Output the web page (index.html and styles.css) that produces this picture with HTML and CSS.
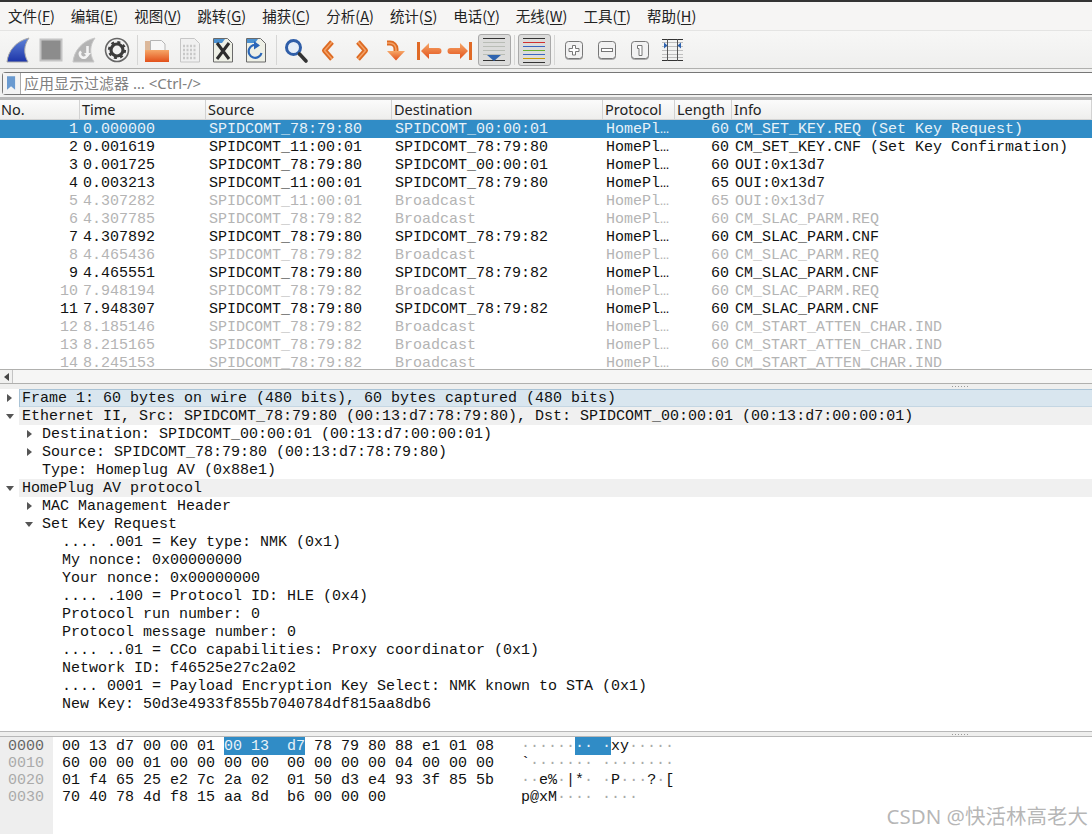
FILE: index.html
```html
<!DOCTYPE html>
<html lang="zh">
<head>
<meta charset="utf-8">
<title>Wireshark</title>
<link rel="stylesheet" href="styles.css">
</head>
<body>
<div class="app">
  <nav class="menubar">
    <span>文件(<u>F</u>)</span><span>编辑(<u>E</u>)</span><span>视图(<u>V</u>)</span><span>跳转(<u>G</u>)</span><span>捕获(<u>C</u>)</span><span>分析(<u>A</u>)</span><span>统计(<u>S</u>)</span><span>电话(<u>Y</u>)</span><span>无线(<u>W</u>)</span><span>工具(<u>T</u>)</span><span>帮助(<u>H</u>)</span>
  </nav>
  <div class="toolbar">
    <div class="tool"><svg viewBox="0 0 32 32" class="ico"><defs><linearGradient id="fin" x1="0" y1="0" x2="0" y2="1"><stop offset="0" stop-color="#5f83d8"/><stop offset="1" stop-color="#1c34a8"/></linearGradient><linearGradient id="org" x1="0" y1="0" x2="0" y2="1"><stop offset="0" stop-color="#f6a768"/><stop offset="1" stop-color="#e2501a"/></linearGradient></defs><path d="M5 28C6 17 14 7 27 4C22 11 21 19 26 28Z" fill="url(#fin)" stroke="#a9a9a9"/></svg></div>
    <div class="tool"><svg viewBox="0 0 32 32" class="ico"><rect x="5.500" y="5.500" width="21" height="21" fill="#8c8c8c" stroke="#c4c4c4" stroke-width="2"/></svg></div>
    <div class="tool"><svg viewBox="0 0 32 32" class="ico"><path d="M5 28C6 17 14 7 27 4C22 11 21 19 26 28Z" fill="#b4b4b4" stroke="#c8c8c8"/><path d="M19.500 12v8a3.800 3.800 0 1 1-6.500-2.700" fill="none" stroke="#f4f4f4" stroke-width="2.600"/><path d="M16 19l3.500 4 3.500-4z" fill="#f4f4f4"/></svg></div>
    <div class="tool"><svg viewBox="0 0 32 32" class="ico"><circle cx="16" cy="16" r="11.500" fill="#f2f2f2" stroke="#666" stroke-width="1.600"/><circle cx="16" cy="16" r="6" fill="none" stroke="#3c3c3c" stroke-width="3.200"/><circle cx="16" cy="16" r="8" fill="none" stroke="#3c3c3c" stroke-width="2.200" stroke-dasharray="3 3.300"/></svg></div>
    <div class="sep"></div>
    <div class="tool"><svg viewBox="0 0 32 32" class="ico"><path d="M4 7h5v9H4z" fill="#dcb89a"/><path d="M9.500 6.500h11l3.500 3.500v7H9.500z" fill="#f7f7f7" stroke="#b5b5b5"/><rect x="4" y="16" width="24" height="12" fill="url(#org)"/></svg></div>
    <div class="tool"><svg viewBox="0 0 32 32" class="ico"><path d="M6.500 4.500h14l5 5v18.500h-19z" fill="#f0f0f0" stroke="#c6c6c6"/><path d="M9 12h14M9 16h14M9 20h14M9 24h14" stroke="#c8c8c8" stroke-width="2.400" stroke-dasharray="2 1.500"/></svg></div>
    <div class="tool"><svg viewBox="0 0 32 32" class="ico"><path d="M6.500 4.500h14l5 5v18.500h-19z" fill="#eef0e6" stroke="#6a6a6a"/><path d="M7 5h11l-3 4H7z" fill="#4a90d0"/><path d="M10 9l12 16M22 9L10 25" stroke="#2d2d2d" stroke-width="3"/></svg></div>
    <div class="tool"><svg viewBox="0 0 32 32" class="ico"><path d="M6.500 4.500h14l5 5v18.500h-19z" fill="#eef0e6" stroke="#6a6a6a"/><path d="M7 5h11l-3 4H7z" fill="#4a90d0"/><path d="M18 11.500a6.500 6.500 0 1 0 3.500 7.500" fill="none" stroke="#2a66b8" stroke-width="2.200"/><path d="M14 7l6 4.500-6 4z" fill="#2a66b8"/></svg></div>
    <div class="sep"></div>
    <div class="tool"><svg viewBox="0 0 32 32" class="ico"><circle cx="13.500" cy="13.500" r="7" fill="#e6eef8" stroke="#2f5ea8" stroke-width="3"/><path d="M19.500 20l6.500 7" stroke="#333" stroke-width="3.600" stroke-linecap="round"/></svg></div>
    <div class="tool"><svg viewBox="0 0 32 32" class="ico"><path class="o1" d="M19 8l-7.500 8.500L19 25"/><path class="o2" d="M19 8l-7.500 8.500L19 25"/></svg></div>
    <div class="tool"><svg viewBox="0 0 32 32" class="ico"><path class="o1" d="M12 8l7.500 8.500L12 25"/><path class="o2" d="M12 8l7.500 8.500L12 25"/></svg></div>
    <div class="tool"><svg viewBox="0 0 32 32" class="ico"><path class="o1" d="M8 9h3a6 6 0 0 1 6 6v4"/><path class="o2" d="M8 9h3a6 6 0 0 1 6 6v4"/><path d="M8 17h18l-9 9.500z" fill="url(#org)"/></svg></div>
    <div class="tool"><svg viewBox="0 0 32 32" class="ico"><path d="M6.500 8v18" stroke="#e06a26" stroke-width="3"/><path d="M9 17l8-8v5h9.500a3 3 0 0 1 0 6H17v5z" fill="url(#org)"/></svg></div>
    <div class="tool"><svg viewBox="0 0 32 32" class="ico"><path d="M25.500 8v18" stroke="#e06a26" stroke-width="3"/><path d="M23 17l-8-8v5H5.500a3 3 0 0 0 0 6H15v5z" fill="url(#org)"/></svg></div>
    <div class="tool on"><svg viewBox="1 1 30 30" class="ico"><path d="M5 4.500h22M5 26.500h22" stroke="#333"/><path d="M5 8.500h22M5 12.500h22M5 16.500h22M5 20.500h22" stroke="#b9bdb6"/><path d="M9 21h14l-7 6z" fill="#2f64b0"/></svg></div>
    <div class="sep"></div>
    <div class="tool on"><svg viewBox="1 1 30 30" class="ico"><path d="M5 4.500h22" stroke="#333"/><path d="M5 8.500h22" stroke="#d03030"/><path d="M5 12.500h22" stroke="#3a66c0"/><path d="M5 16.500h22" stroke="#6ab030"/><path d="M5 20.500h22" stroke="#3a66c0"/><path d="M5 24.500h22" stroke="#c89a00"/><path d="M5 28.500h22" stroke="#333"/></svg></div>
    <div class="sep"></div>
    <div class="tool"><svg viewBox="0 0 32 32" class="ico"><rect x="7.500" y="7.500" width="17" height="17" rx="3" fill="#f2f2f2" stroke="#777" class="zb"/><path d="M14.500 11.500h3v3h3.500v3h-3.500v3.500h-3v-3.500H11v-3h3.500z" fill="#fff" stroke="#777"/></svg></div>
    <div class="tool"><svg viewBox="0 0 32 32" class="ico"><rect x="7.500" y="7.500" width="17" height="17" rx="3" fill="#f2f2f2" stroke="#777" class="zb"/><rect x="10.500" y="14.500" width="11" height="3" fill="#fff" stroke="#777"/></svg></div>
    <div class="tool"><svg viewBox="0 0 32 32" class="ico"><rect x="7.500" y="7.500" width="17" height="17" rx="3" fill="#f2f2f2" stroke="#777" class="zb"/><path d="M13.500 11.500H18v10h-3v-7h-1.500z" fill="#fff" stroke="#777"/></svg></div>
    <div class="tool"><svg viewBox="0 0 32 32" class="ico"><path d="M5 8.500h21M5 12.500h21M5 16.500h21M5 20.500h21M5 23.500h21" stroke="#bfbfbf"/><path d="M5 5.500h21M5 26.500h21" stroke="#333"/><path d="M10.500 5v22M20.500 5v22" stroke="#555"/><path d="M7 8.500l3.500 3-3.500 3zM24 8.500l-3.500 3 3.500 3z" fill="#2f64b0"/></svg></div>
  </div>
  <div class="filterbar">
    <div class="filter">
      <span class="bookmark"><svg viewBox="0 0 10 16" class="bm"><path d="M0 0h9v15l-4.500-4L0 15z" fill="#6a9ad0"/></svg></span>
      <span class="placeholder">应用显示过滤器 … &lt;Ctrl-/&gt;</span>
    </div>
  </div>
  <div class="packets">
    <div class="row head"><span>No.</span><span>Time</span><span>Source</span><span>Destination</span><span>Protocol</span><span>Length</span><span>Info</span></div>
    <div class="list">
      <div class="row sel"><span class="n">1</span><span>0.000000</span><span>SPIDCOMT_78:79:80</span><span>SPIDCOMT_00:00:01</span><span>HomePl…</span><span class="n">60</span><span>CM_SET_KEY.REQ (Set Key Request)</span></div>
      <div class="row"><span class="n">2</span><span>0.001619</span><span>SPIDCOMT_11:00:01</span><span>SPIDCOMT_78:79:80</span><span>HomePl…</span><span class="n">60</span><span>CM_SET_KEY.CNF (Set Key Confirmation)</span></div>
      <div class="row"><span class="n">3</span><span>0.001725</span><span>SPIDCOMT_78:79:80</span><span>SPIDCOMT_00:00:01</span><span>HomePl…</span><span class="n">60</span><span>OUI:0x13d7</span></div>
      <div class="row"><span class="n">4</span><span>0.003213</span><span>SPIDCOMT_11:00:01</span><span>SPIDCOMT_78:79:80</span><span>HomePl…</span><span class="n">65</span><span>OUI:0x13d7</span></div>
      <div class="row dim"><span class="n">5</span><span>4.307282</span><span>SPIDCOMT_11:00:01</span><span>Broadcast</span><span>HomePl…</span><span class="n">65</span><span>OUI:0x13d7</span></div>
      <div class="row dim"><span class="n">6</span><span>4.307785</span><span>SPIDCOMT_78:79:82</span><span>Broadcast</span><span>HomePl…</span><span class="n">60</span><span>CM_SLAC_PARM.REQ</span></div>
      <div class="row"><span class="n">7</span><span>4.307892</span><span>SPIDCOMT_78:79:80</span><span>SPIDCOMT_78:79:82</span><span>HomePl…</span><span class="n">60</span><span>CM_SLAC_PARM.CNF</span></div>
      <div class="row dim"><span class="n">8</span><span>4.465436</span><span>SPIDCOMT_78:79:82</span><span>Broadcast</span><span>HomePl…</span><span class="n">60</span><span>CM_SLAC_PARM.REQ</span></div>
      <div class="row"><span class="n">9</span><span>4.465551</span><span>SPIDCOMT_78:79:80</span><span>SPIDCOMT_78:79:82</span><span>HomePl…</span><span class="n">60</span><span>CM_SLAC_PARM.CNF</span></div>
      <div class="row dim"><span class="n">10</span><span>7.948194</span><span>SPIDCOMT_78:79:82</span><span>Broadcast</span><span>HomePl…</span><span class="n">60</span><span>CM_SLAC_PARM.REQ</span></div>
      <div class="row"><span class="n">11</span><span>7.948307</span><span>SPIDCOMT_78:79:80</span><span>SPIDCOMT_78:79:82</span><span>HomePl…</span><span class="n">60</span><span>CM_SLAC_PARM.CNF</span></div>
      <div class="row dim"><span class="n">12</span><span>8.185146</span><span>SPIDCOMT_78:79:82</span><span>Broadcast</span><span>HomePl…</span><span class="n">60</span><span>CM_START_ATTEN_CHAR.IND</span></div>
      <div class="row dim"><span class="n">13</span><span>8.215165</span><span>SPIDCOMT_78:79:82</span><span>Broadcast</span><span>HomePl…</span><span class="n">60</span><span>CM_START_ATTEN_CHAR.IND</span></div>
      <div class="row dim"><span class="n">14</span><span>8.245153</span><span>SPIDCOMT_78:79:82</span><span>Broadcast</span><span>HomePl…</span><span class="n">60</span><span>CM_START_ATTEN_CHAR.IND</span></div>
    </div>
  </div>
  <div class="hscroll"><span class="arrowbtn"><i class="tri left"></i></span></div>
  <div class="splitter"><span class="grip"></span></div>
  <div class="tree">
    <div class="node l0 cur"><i class="tri right"></i><span>Frame 1: 60 bytes on wire (480 bits), 60 bytes captured (480 bits)</span></div>
    <div class="node l0 band"><i class="tri down"></i><span>Ethernet II, Src: SPIDCOMT_78:79:80 (00:13:d7:78:79:80), Dst: SPIDCOMT_00:00:01 (00:13:d7:00:00:01)</span></div>
    <div class="node l1"><i class="tri right"></i><span>Destination: SPIDCOMT_00:00:01 (00:13:d7:00:00:01)</span></div>
    <div class="node l1"><i class="tri right"></i><span>Source: SPIDCOMT_78:79:80 (00:13:d7:78:79:80)</span></div>
    <div class="node l1"><i class="tri none"></i><span>Type: Homeplug AV (0x88e1)</span></div>
    <div class="node l0 band"><i class="tri down"></i><span>HomePlug AV protocol</span></div>
    <div class="node l1"><i class="tri right"></i><span>MAC Management Header</span></div>
    <div class="node l1"><i class="tri down"></i><span>Set Key Request</span></div>
    <div class="node l2"><span>.... .001 = Key type: NMK (0x1)</span></div>
    <div class="node l2"><span>My nonce: 0x00000000</span></div>
    <div class="node l2"><span>Your nonce: 0x00000000</span></div>
    <div class="node l2"><span>.... .100 = Protocol ID: HLE (0x4)</span></div>
    <div class="node l2"><span>Protocol run number: 0</span></div>
    <div class="node l2"><span>Protocol message number: 0</span></div>
    <div class="node l2"><span>.... ..01 = CCo capabilities: Proxy coordinator (0x1)</span></div>
    <div class="node l2"><span>Network ID: f46525e27c2a02</span></div>
    <div class="node l2"><span>.... 0001 = Payload Encryption Key Select: NMK known to STA (0x1)</span></div>
    <div class="node l2"><span>New Key: 50d3e4933f855b7040784df815aa8db6</span></div>
  </div>
  <div class="splitter low"><span class="grip"></span></div>
  <div class="hex">
    <div class="offsets"><div class="active">0000</div><div>0010</div><div>0020</div><div>0030</div></div>
    <div class="bytes"><div>00 13 d7 00 00 01 <mark>00 13  d7</mark> 78 79 80 88 e1 01 08</div><div>60 00 00 01 00 00 00 00  00 00 00 00 04 00 00 00</div><div>01 f4 65 25 e2 7c 2a 02  01 50 d3 e4 93 3f 85 5b</div><div>70 40 78 4d f8 15 aa 8d  b6 00 00 00</div></div>
    <div class="ascii"><div><b>······</b><mark>·· ·</mark>xy<b>·····</b></div><div>`<b>·······</b> <b>········</b></div><div><b>··</b>e%<b>·</b>|*<b>·</b> <b>·</b>P<b>···</b>?<b>·</b>[</div><div>p@xM<b>····</b> <b>····</b></div></div>
  </div>
  <div class="watermark">CSDN @快活林高老大</div>
</div>
</body>
</html>
```
FILE: styles.css
```css
* { box-sizing: border-box; }
html, body { margin: 0; padding: 0; height: 100%; overflow: hidden; }
body { background: #fff; color: #111; font-family: "Noto Sans", "Noto Sans CJK SC", sans-serif; }
.app { position: relative; width: 1092px; height: 834px; display: flex; flex-direction: column; overflow: hidden; border-top: 2px solid #333; }

.menubar { height: 28px; flex: none; display: flex; gap: 16px; align-items: center; padding: 0 0 0 8px; background: #f6f5f4; font-size: 14.500px; line-height: 20px; color: #222; font-family: "Noto Sans CJK SC", "Noto Sans", sans-serif; }
.menubar u { text-underline-offset: 2px; }

.toolbar { height: 39px; flex: none; display: flex; align-items: center; padding-left: 1.500px; background: linear-gradient(#f7f7f6, #efefee); border-top: 1px solid #e4e4e3; border-bottom: 1px solid #b0b0ae; }
.tool { width: 33px; height: 32px; flex: none; display: flex; align-items: center; justify-content: center; }
.tool.on { background: #dcdcdb; border: 1px solid #a9a9a9; border-radius: 3px; }
.ico { width: 32px; height: 32px; flex: none; display: block; }
.tool.on .ico { width: 30px; height: 30px; }
.o1 { fill: none; stroke: #dd6a22; stroke-width: 5; stroke-linejoin: round; }
.o2 { fill: none; stroke: #f3a066; stroke-width: 1.600; stroke-linejoin: round; }
.zb { filter: drop-shadow(0 1px 0 #aaa); }
.sep { width: 7px; height: 30px; flex: none; display: flex; justify-content: center; }
.sep::before { content: ""; width: 1px; height: 30px; background: #d6d6d5; }

.filterbar { height: 31px; flex: none; padding: 3px 0 0 2px; background: #f1f1f0; border-bottom: 3px solid #b8b8b8; }
.filter { height: 23px; display: flex; align-items: center; background: #fff; border: 1px solid #777; border-right: none; border-radius: 4px 0 0 4px; }
.bookmark { width: 18px; height: 100%; flex: none; display: flex; align-items: center; justify-content: center; border-right: 1px solid #aaa; background: #f3f3f3; }
.bm { width: 9px; height: 15px; display: block; }
.placeholder { padding-left: 3px; font-size: 15px; line-height: 21px; color: #808080; font-family: "Noto Sans", "Noto Sans CJK SC", sans-serif; white-space: pre; }

.packets { height: 269px; flex: none; display: flex; flex-direction: column; overflow: hidden; }
.row { display: grid; grid-template-columns: 80px 126px 186px 211px 72px 57px 1fr; height: 18px; flex: none; font: 15px/20px "Liberation Mono", monospace; white-space: pre; color: #111; }
.row > span { padding-left: 3px; }
.row > .n { padding: 0 2px 0 0; text-align: right; }
.row > .n:nth-child(6) { padding-right: 3px; }
.head { height: 20px; font: 14.500px/19px "Noto Sans", sans-serif; color: #222; background: linear-gradient(#fbfbfb, #eeeeed); border-bottom: 1px solid #d4d4d4; }
.head > span { padding-left: 2px; border-right: 1px solid #d2d2d2; }
.head > span:first-child { padding-left: 1px; }
.list { flex: 1; min-height: 0; overflow: hidden; }
.sel { background: #308cc6; color: #e8f2f8; }
.dim { color: #b4b4b4; }

.hscroll { height: 15px; flex: none; background: #f6f6f5; border-top: 1px solid #b0b0ae; border-bottom: 1px solid #b0b0ae; }
.arrowbtn { width: 13px; height: 100%; display: flex; align-items: center; justify-content: center; border-right: 1px solid #c4c4c4; background: #f1f1f0; }
.splitter { height: 5px; flex: none; background: #efefee; display: flex; justify-content: center; align-items: center; padding-left: 828px; }
.grip { display: block; width: 16px; height: 1px; background: repeating-linear-gradient(90deg, #999 0 1px, transparent 1px 3px); }
.low { height: 6px; border-top: 1px solid #b8b8b8; border-bottom: 1px solid #b8b8b8; }

.tri { display: block; width: 0; height: 0; border-style: solid; border-color: transparent; flex: none; }
.tri.left { border-width: 4px 5px 4px 0; border-right-color: #444; }
.tri.right { border-width: 4px 0 4px 5px; border-left-color: #555; margin: 0 7px 0 6px; }
.tri.down { border-width: 5px 4px 0; border-top-color: #555; margin: 0 6px 0 4px; }
.tri.none { width: 18px; border: none; }

.tree { height: 342px; flex: none; overflow: hidden; }
.node { height: 18px; display: flex; align-items: center; font: 15px/20px "Liberation Mono", monospace; white-space: pre; color: #111; }
.node.l0 { padding-left: 2px; }
.node.l0 > .tri.right { margin: 0 7px 0 5px; }
.node.l0 > .tri.down { margin: 0 5px 0 4px; }
.node > span { padding: 0 0 0 3px; flex: 1; height: 18px; }
.node.l1 { padding-left: 21px; }
.node.l2 { padding-left: 59px; }
.band > span { background: #f0f0f0; }
.cur > span { background: #d9e6ef; box-shadow: inset 1px 1px 0 #a9c3d6, inset 0 -1px 0 #c4d6e3; }

.hex { flex: 1; min-height: 0; display: flex; font: 15px/17px "Liberation Mono", monospace; color: #111; }
.hex > div > div { white-space: pre; height: 17px; }
.offsets { width: 53px; flex: none; padding: 1px 0 0 8px; background: #eeeeee; color: #aaa; }
.offsets .active { color: #666; }
.bytes { width: 468px; flex: none; padding: 1px 0 0 9px; }
.ascii { padding-top: 1px; }
.ascii b { font-weight: normal; color: #aaa; }
mark { background: #308cc6; color: #e8f2f8; padding: 1px 0 0; }

.watermark { position: absolute; right: 4px; bottom: 5px; font: 20.500px/26px "Noto Sans", "Noto Sans CJK SC", sans-serif; color: rgba(110,110,110,.5); white-space: pre; }
```
